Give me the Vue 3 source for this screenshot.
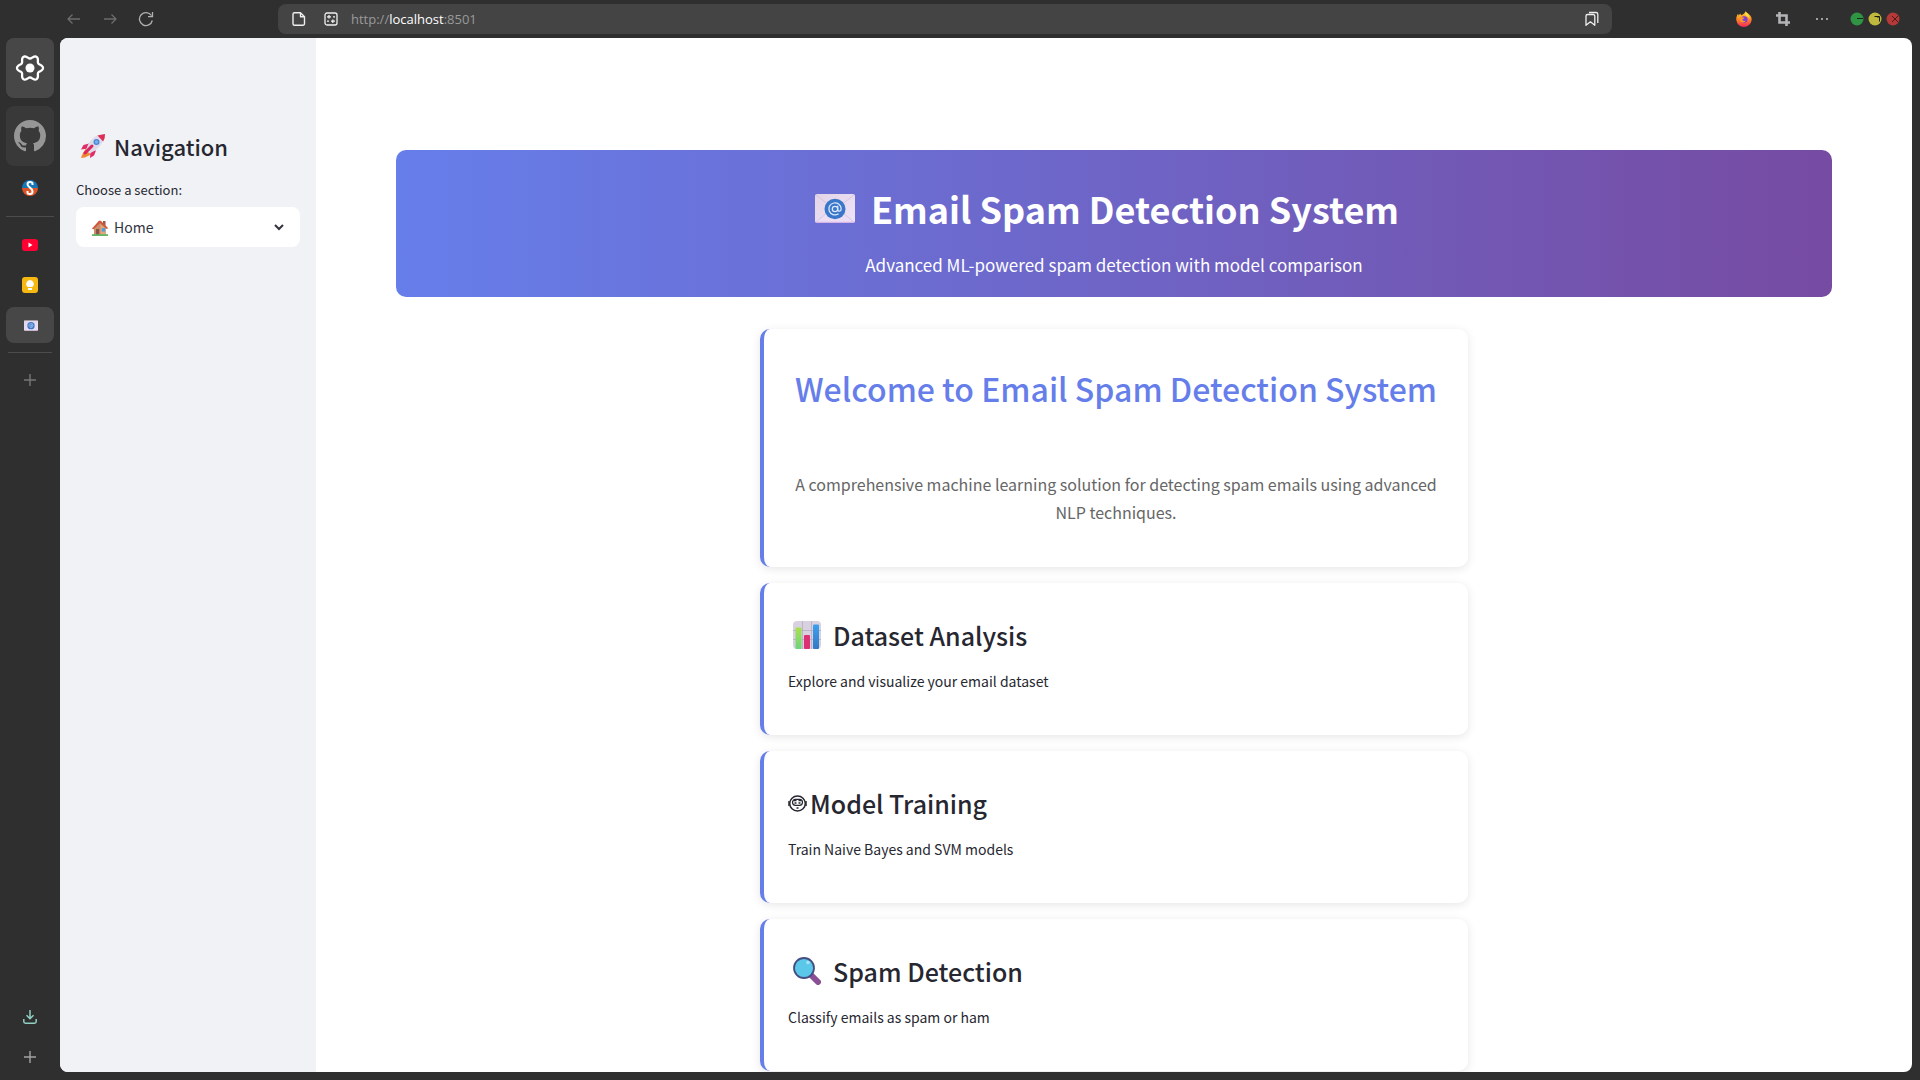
<script setup>
import { ref } from 'vue'

const section = ref('Home')
const sections = ['Home', 'Dataset Analysis', 'Model Training', 'Spam Detection']

const features = [
  { icon: 'chart', title: 'Dataset Analysis', text: 'Explore and visualize your email dataset' },
  { icon: 'face', title: 'Model Training', text: 'Train Naive Bayes and SVM models' },
  { icon: 'lens', title: 'Spam Detection', text: 'Classify emails as spam or ham' },
]

// Outline of the six-lobed gear, sampled around a circle
const gear = Array.from({ length: 72 }, (_, i) => {
  const a = (i / 72) * Math.PI * 2
  const r = 11.2 + 1.8 * Math.cos(6 * a)
  return `${(15 + r * Math.cos(a)).toFixed(2)},${(15 + r * Math.sin(a)).toFixed(2)}`
}).join(' ')
</script>

<template>
  <div class="browser">
    <svg class="defs" width="0" height="0" aria-hidden="true">
      <defs>
        <linearGradient id="paper" x1="0" y1="0" x2="1" y2="1">
          <stop offset="0" stop-color="#e3d5e6" />
          <stop offset="1" stop-color="#efe3fa" />
        </linearGradient>
        <linearGradient id="barGreen" x1="0" y1="0" x2="0" y2="1">
          <stop offset="0" stop-color="#a8e04c" />
          <stop offset="1" stop-color="#6fd47e" />
        </linearGradient>
        <linearGradient id="barBlue" x1="0" y1="0" x2="0" y2="1">
          <stop offset="0" stop-color="#3ba0ee" />
          <stop offset="1" stop-color="#3579c4" />
        </linearGradient>
        <linearGradient id="flame" x1="0" y1="0" x2="0" y2="1">
          <stop offset="0" stop-color="#ffd83a" />
          <stop offset="0.5" stop-color="#ff8a1e" />
          <stop offset="1" stop-color="#f5245e" />
        </linearGradient>
        <symbol id="mail" viewBox="0 0 40 30">
          <rect width="40" height="30" rx="2" fill="url(#paper)" />
          <path d="M1 29 16 16h8l15 13z" fill="#ecdff5" />
          <path d="M1 1l15 12M39 1 24 13M1 29l14-12M39 29 25 17" stroke="#cfc0dc" stroke-width="0.8" />
          <path d="M1 29.3h38" stroke="#d6b6e6" stroke-width="1.4" />
          <circle cx="20" cy="15.500" r="10.500" fill="#3a76c9" />
          <circle cx="20" cy="15.500" r="2.700" fill="none" stroke="#dbe8fb" stroke-width="1.300" />
          <path d="M22.700 12.600v3.400c0 2.600 3.500 2.300 3.500-.8a6.200 6.200 0 1 0-3 5.500" fill="none" stroke="#dbe8fb" stroke-width="1.300" stroke-linecap="round" />
        </symbol>
        <symbol id="plus" viewBox="0 0 12 12">
          <path d="M6 0v12M0 6h12" stroke="currentColor" stroke-width="1.400" />
        </symbol>
      </defs>
    </svg>

    <header class="toolbar">
      <nav class="history">
        <button type="button" aria-label="Back" class="dim">
          <svg width="14" height="12" viewBox="0 0 14 12" fill="none" stroke="currentColor" stroke-width="1.300"><path d="M13 6H1M5.500 1.500 1 6l4.500 4.500" /></svg>
        </button>
        <button type="button" aria-label="Forward" class="dim">
          <svg width="14" height="12" viewBox="0 0 14 12" fill="none" stroke="currentColor" stroke-width="1.300"><path d="M1 6h12M8.500 1.500 13 6l-4.500 4.500" /></svg>
        </button>
        <button type="button" aria-label="Reload">
          <svg width="16" height="16" viewBox="0 0 16 16" fill="none" stroke="currentColor" stroke-width="1.300"><path d="M14.300 9.500A6.500 6.500 0 1 1 13.400 4.500M14.500 1v4.600H10" /></svg>
        </button>
      </nav>
      <div class="address">
        <button type="button" aria-label="Page information">
          <svg width="14" height="16" viewBox="0 0 14 16" fill="none" stroke="currentColor" stroke-width="1.400" stroke-linejoin="round"><path d="M2.500 1.700h6l4 4v7.100a1.500 1.500 0 0 1-1.500 1.500H2.500A1.500 1.500 0 0 1 1 12.800V3.200a1.500 1.500 0 0 1 1.500-1.500zM8.500 2v3.700h3.800" /></svg>
        </button>
        <button type="button" aria-label="Permissions">
          <svg width="14" height="14" viewBox="0 0 14 14" fill="none" stroke="currentColor" stroke-width="1.300"><rect x="1" y="1" width="12" height="12" rx="2" /><path d="M3 4.800h4M9 4.800h2M3 9.200h2M7 9.200h4M5 3v3.600M8.800 7.500v3.400" /></svg>
        </button>
        <div class="url" role="textbox" aria-label="Address" tabindex="0">http://<span>localhost</span>:8501</div>
        <button type="button" aria-label="Bookmark" class="mark">
          <svg width="14" height="16" viewBox="0 0 14 16" fill="none" stroke="currentColor" stroke-width="1.300" stroke-linejoin="round"><path d="M1 14.300V5a1.500 1.500 0 0 1 1.500-1.500h5.800A1.500 1.500 0 0 1 9.800 5v9.300l-4.400-3.500zM4 1.500h7a1.800 1.800 0 0 1 1.800 1.800V12" /></svg>
        </button>
      </div>
      <div class="tools">
        <button type="button" aria-label="Firefox account">
          <svg width="16" height="16" viewBox="0 0 16 16">
            <path d="M9.500.2c1 1.200 2 1.600 3.200 2.800 2.200 1.600 3.200 3.800 2.900 6.200A7.700 7.700 0 0 1 .3 9C0 6.800.8 4.800 2 2.800l.7 1.600 1.500-1.800.9 1.600c1.700-.4 3.300-1.400 4.400-4z" fill="url(#flame)" />
            <circle cx="8.200" cy="8.600" r="3.300" fill="#7b3ddb" />
            <path d="M4.300 6.500c1.800-.7 3 0 4.300.4-.8 1-2 .8-2.500 1.700.7 1.600 2.600 1.600 3.800.8-.5 2.300-4.500 2.900-6 .3z" fill="#ff9a2a" />
            <path d="M10 1.500c2 2 3.500 3.200 3.500 6.400-1-2.400-2.700-2.600-3.800-3.600-.6-.8-.2-1.800.3-2.800z" fill="#ffe04d" />
          </svg>
        </button>
        <button type="button" aria-label="Screenshot">
          <svg width="14" height="14" viewBox="0 0 14 14" fill="none" stroke="#b4b4b6" stroke-width="2.600"><path d="M3.500 0v10.500H14M0 3.500h10.500V14" /></svg>
        </button>
        <button type="button" aria-label="More">
          <svg width="14" height="4" viewBox="0 0 14 4" fill="#a0a0a0"><rect x="1" y="1" width="2" height="2" /><rect x="6" y="1" width="2" height="2" /><rect x="11" y="1" width="2" height="2" /></svg>
        </button>
        <div class="windows">
          <button type="button" aria-label="Minimize"><svg width="14" height="14" viewBox="0 0 14 14"><circle cx="7" cy="7" r="6.500" fill="#2f9444" /><path d="M7 6.500h6" stroke="#132b18" /></svg></button>
          <button type="button" aria-label="Restore"><svg width="14" height="14" viewBox="0 0 14 14"><circle cx="7" cy="7" r="6.500" fill="#bfba3e" /><path d="M6.500 4.500h5v5M10 4.500V6" stroke="#1c1b08" fill="none" /></svg></button>
          <button type="button" aria-label="Close"><svg width="14" height="14" viewBox="0 0 14 14"><circle cx="7" cy="7" r="6.500" fill="#b33a38" /><path d="m6 4 6 6M12 4l-6 6" stroke="#541715" /></svg></button>
        </div>
      </div>
    </header>

    <div class="body">
      <aside class="tabs">
        <button type="button" class="tile lit" aria-label="Settings">
          <svg width="30" height="30" viewBox="0 0 30 30">
            <polygon :points="gear" fill="none" stroke="#fff" stroke-width="2.300" stroke-linejoin="round" />
            <circle cx="15" cy="15" r="4.500" fill="#fff" />
          </svg>
        </button>
        <button type="button" class="tile" aria-label="GitHub">
          <svg width="32" height="32" viewBox="0 0 16 16" fill="#969696"><path d="M8 0C3.580 0 0 3.580 0 8c0 3.540 2.290 6.530 5.470 7.590.4.070.550-.170.550-.380 0-.190-.010-.820-.010-1.490-2.010.370-2.530-.490-2.690-.940-.090-.230-.480-.940-.820-1.130-.280-.150-.680-.520-.010-.530.630-.010 1.080.580 1.230.820.720 1.210 1.870.870 2.330.660.070-.520.280-.870.510-1.070-1.780-.2-3.640-.890-3.640-3.950 0-.870.310-1.590.820-2.150-.080-.2-.360-1.020.080-2.120 0 0 .670-.210 2.200.820.640-.180 1.320-.270 2-.270s1.360.090 2 .270c1.530-1.040 2.200-.820 2.200-.820.440 1.100.160 1.920.080 2.120.510.560.820 1.270.820 2.150 0 3.070-1.870 3.750-3.650 3.950.290.250.540.730.540 1.480 0 1.070-.010 1.930-.010 2.200 0 .210.150.460.550.380A8.010 8.010 0 0 0 16 8c0-4.420-3.580-8-8-8z" /></svg>
        </button>
        <button type="button" class="row" aria-label="Pinned site">
          <svg width="16" height="16" viewBox="0 0 16 16">
            <path d="M0 8a8 8 0 0 1 16 0z" fill="#1677b8" /><path d="M0 8a8 8 0 0 0 16 0z" fill="#db5427" />
            <path d="M10.500 5V3.500Q10.500 2 8 2T5.500 4.200Q5.500 6 8 7.700T10.500 11.500Q10.500 14 8 14T5.500 12.500V11" fill="none" stroke="#fff" stroke-width="2" />
          </svg>
        </button>
        <hr />
        <button type="button" class="row" aria-label="YouTube">
          <svg width="16" height="12" viewBox="0 0 16 12"><rect width="16" height="12" rx="3" fill="#ff0033" /><path d="M6.500 3.500v5L10.500 6z" fill="#fff" /></svg>
        </button>
        <button type="button" class="row" aria-label="Keep">
          <svg width="16" height="16" viewBox="0 0 16 16"><rect width="16" height="16" rx="3" fill="#f5b912" /><path d="M8 3a4 4 0 0 1 2.500 7h-5A4 4 0 0 1 8 3zM6 11h4v2H6z" fill="#fff" /></svg>
        </button>
        <button type="button" class="row lit" aria-label="Email Spam Detection System">
          <svg class="mini" width="14" height="11" viewBox="0 0 40 30"><use href="#mail" /></svg>
        </button>
        <hr class="short" />
        <button type="button" class="row faint" aria-label="New tab"><svg width="12" height="12"><use href="#plus" /></svg></button>
        <span class="fill"></span>
        <button type="button" class="row" aria-label="Downloads">
          <svg width="14" height="14" viewBox="0 0 14 14" fill="none" stroke="#8ed0c2" stroke-width="1.500"><path d="M7 0v8.500M3.500 5.200 7 8.700l3.500-3.500M.8 9v2.500Q.8 13.200 2.500 13.200h9q1.700 0 1.700-1.700V9" /></svg>
        </button>
        <button type="button" class="row grey" aria-label="New workspace"><svg width="12" height="12"><use href="#plus" /></svg></button>
      </aside>

      <div class="page">
        <section class="sidebar">
          <h2>
            <svg width="26" height="24" viewBox="0 0 26 24">
              <path d="M6 14 2 21l-1 3 4-.5 6-3z" fill="#f08a32" />
              <path d="M9 9.500 3.500 11 1 15.500l7-1zM16 16.500l-2 5-4 2.500.5-7z" fill="#e12c68" />
              <path d="M6 16q3-11 12-15l6-1q.5 4-1.500 8Q18 16 9.500 19.500z" fill="#dedaea" />
              <path d="M17.500 1.500 25 0q.3 4-1.800 7.500z" fill="#dd2f55" />
              <circle cx="16.500" cy="8" r="3" fill="#4c86d6" /><circle cx="16.500" cy="8" r="1.700" fill="#73b2ee" />
              <path d="M5 19 12 12" stroke="#d8265f" stroke-width="3" stroke-linecap="round" />
            </svg>
            Navigation
          </h2>
          <label for="section">Choose a section:</label>
          <div class="picker">
            <select id="section" v-model="section">
              <option v-for="name in sections" :key="name">{{ name }}</option>
            </select>
            <svg class="house" width="16" height="16" viewBox="0 0 16 16">
              <rect x="11" y="1" width="2.500" height="5" fill="#9a5a4a" />
              <path d="M2 7.500 8 2l6 5.500V15H2z" fill="#c98e68" />
              <path d="M8.500 4 14 9v6H8.500z" fill="#e0a77e" />
              <path d="M0 8.500 7 .8h1.800L16 8l-1 1.200L8 3 1.200 9.500z" fill="#d0553d" />
              <rect x="4" y="9" width="3.200" height="6" fill="#875449" /><rect x="9.800" y="8" width="3.200" height="3.600" fill="#4f9fe0" />
              <rect y="14.200" width="16" height="1.800" fill="#63b667" />
            </svg>
            <svg class="chevron" width="10" height="7" viewBox="0 0 10 7" fill="none" stroke="#31333f" stroke-width="2"><path d="m1 1 4 4 4-4" /></svg>
          </div>
        </section>

        <main>
          <div class="banner">
            <h1><svg width="40" height="29" viewBox="0 0 40 30" preserveAspectRatio="none"><use href="#mail" /></svg>Email Spam Detection System</h1>
            <p>Advanced ML-powered spam detection with model comparison</p>
          </div>
          <div class="cards">
            <article class="card welcome">
              <h2>Welcome to Email Spam Detection System</h2>
              <p>A comprehensive machine learning solution for detecting spam emails using advanced NLP techniques.</p>
            </article>
            <article v-for="item in features" :key="item.title" class="card">
              <h3 :class="{ tight: item.icon === 'face' }">
                <svg v-if="item.icon === 'chart'" width="28" height="28" viewBox="0 0 28 28">
                  <rect width="28" height="28" rx="4" fill="#d8d1e0" />
                  <path d="M9.500 0v28M18.500 0v28M0 9.500h28M0 18.500h28" stroke="#b5acbf" stroke-width="0.8" />
                  <rect x="2.500" y="6.500" width="6" height="21.500" rx="1" fill="url(#barGreen)" />
                  <rect x="11" y="14" width="6" height="14" rx="1" fill="#dc3173" />
                  <rect x="20" y="3.500" width="6" height="24.500" rx="1" fill="url(#barBlue)" />
                </svg>
                <svg v-else-if="item.icon === 'face'" width="19" height="17" viewBox="0 0 19 17" fill="none" stroke="#262730">
                  <ellipse cx="9.500" cy="8.500" rx="7.800" ry="7.500" stroke-width="1.500" />
                  <path d="M1 6v5M18 6v5" stroke-width="1.500" />
                  <rect x="4.500" y="4.300" width="10" height="6" rx="3" stroke-width="1.200" />
                  <path d="M5.500 5.500h3M10.500 5.500h3" stroke-width="1.300" /><path d="M6.500 8h2M10.500 8h2M8.500 13h2" stroke-width="1.300" />
                </svg>
                <svg v-else width="28" height="28" viewBox="0 0 28 28">
                  <path d="m18 18 7 7" stroke="#8a4f94" stroke-width="6" stroke-linecap="round" />
                  <circle cx="11" cy="11" r="10" fill="#5bc8ea" stroke="#454e82" stroke-width="1.800" />
                  <circle cx="15" cy="5.500" r="1.700" fill="#a8e6f7" />
                </svg>
                {{ item.title }}
              </h3>
              <p>{{ item.text }}</p>
            </article>
          </div>
        </main>
      </div>
    </div>
  </div>
</template>

<style>
body {
  background: #2f2f2f;
}
</style>

<style scoped>
* {
  box-sizing: border-box;
}
.browser {
  display: flex;
  flex-direction: column;
  height: 100vh;
  overflow: hidden;
  background: #2f2f2f;
  color: #262730;
  font-family: "Noto Sans CJK SC", "Noto Sans", sans-serif;
}
.defs {
  position: absolute;
}
h1,
h2,
h3,
p {
  margin: 0;
}
svg {
  flex: none;
  display: block;
}
button {
  display: flex;
  align-items: center;
  justify-content: center;
  padding: 0;
  border: 0;
  background: none;
  color: inherit;
}
.toolbar {
  display: flex;
  align-items: center;
  height: 38px;
  flex: none;
  color: #b0b0b0;
}
.history {
  display: flex;
  width: 278px;
  padding-left: 56px;
}
.history button {
  width: 36px;
  height: 30px;
}
.history .dim {
  color: #6c6c6c;
}
.address {
  display: flex;
  align-items: center;
  flex: 1;
  height: 30px;
  padding: 0 12px 0 13px;
  border-radius: 8px;
  background: #444;
  color: #eee;
}
.address button {
  width: 16px;
  margin-right: 16px;
}
.address .mark {
  margin: 0;
}
.url {
  flex: 1;
  margin: 0 8px 0 -4px;
  font: 13px/20px "Open Sans", "Noto Sans", sans-serif;
  color: #9a9a9a;
}
.url span {
  color: #fff;
}
.tools {
  display: flex;
  align-items: center;
  width: 308px;
  padding: 0 20px 0 112px;
}
.tools > button {
  width: 39px;
}
.windows {
  display: flex;
  gap: 4px;
  margin-left: auto;
}
.body {
  display: flex;
  flex: 1;
  min-height: 0;
}
.tabs {
  display: flex;
  flex-direction: column;
  gap: 4px;
  width: 60px;
  padding: 0 6px 5px;
}
.tile {
  height: 60px;
  border-radius: 8px;
  background: #393939;
}
.tile.lit {
  margin-bottom: 4px;
}
.row {
  height: 36px;
  border-radius: 8px;
}
.lit {
  background: #474747;
}
.mini {
  margin-left: 2px;
}
.faint {
  color: #777;
}
.grey {
  color: #a4a4a4;
}
hr {
  width: 100%;
  height: 1px;
  margin: 6px 0;
  border: 0;
  background: #4c4c4c;
}
.short {
  width: 44px;
  margin: 5px auto;
}
.fill {
  flex: 1;
}
.page {
  display: flex;
  flex: 1;
  margin: 0 8px 8px 0;
  overflow: hidden;
  border-radius: 8px;
  background: #fff;
}
.sidebar {
  width: 256px;
  flex: none;
  padding: 90px 16px 16px;
  background: #f0f2f6;
}
.sidebar h2 {
  display: flex;
  align-items: center;
  gap: 8px;
  padding-left: 4px;
  font-size: 22px;
  line-height: 36px;
  font-weight: 500;
}
.sidebar label {
  display: block;
  margin: 16px 0 7px;
  font-size: 13px;
  line-height: 20px;
}
.picker {
  position: relative;
}
select {
  width: 100%;
  height: 40px;
  padding: 0 40px 0 38px;
  border: 0;
  border-radius: 8px;
  appearance: none;
  background: #fff;
  color: #31333f;
  font-family: inherit;
  font-size: 14px;
}
.house,
.chevron {
  position: absolute;
  pointer-events: none;
}
.house {
  left: 16px;
  top: 13px;
}
.chevron {
  right: 16px;
  top: 17px;
}
main {
  flex: 1;
  min-width: 0;
  padding: 112px 80px 0;
}
.banner {
  padding: 34px 16px 18px;
  border-radius: 10px;
  background: linear-gradient(90deg, #667eea, #764ba2);
  color: #fff;
  text-align: center;
}
.banner h1 {
  display: flex;
  align-items: center;
  justify-content: center;
  gap: 16px;
  padding-right: 14px;
  font-size: 36px;
  line-height: 48px;
  font-weight: 700;
}
.banner p {
  margin-top: 19px;
  font-size: 17px;
  line-height: 28px;
}
.cards {
  display: flex;
  flex-direction: column;
  gap: 16px;
  width: calc(50% - 10px);
  margin: 32px auto 0;
}
.card {
  padding: 30px 24px 42px;
  border-left: 4px solid #667eea;
  border-radius: 10px;
  background: #fff;
  box-shadow: 0 2px 10px rgba(0, 0, 0, 0.1);
}
.card h3 {
  display: flex;
  align-items: center;
  gap: 12px;
  padding-left: 5px;
  font-size: 25px;
  line-height: 44px;
  font-weight: 500;
}
.card h3.tight {
  gap: 3px;
  padding-left: 0;
}
.card p {
  margin-top: 12px;
  font-size: 14px;
  line-height: 24px;
}
.card.welcome {
  padding: 35px 24px 41px;
  text-align: center;
}
.welcome h2 {
  color: #667eea;
  font-size: 32px;
  line-height: 48px;
  font-weight: 500;
  white-space: nowrap;
}
.card.welcome p {
  margin-top: 58px;
  color: #666;
  font-size: 16px;
  line-height: 28px;
}
</style>
